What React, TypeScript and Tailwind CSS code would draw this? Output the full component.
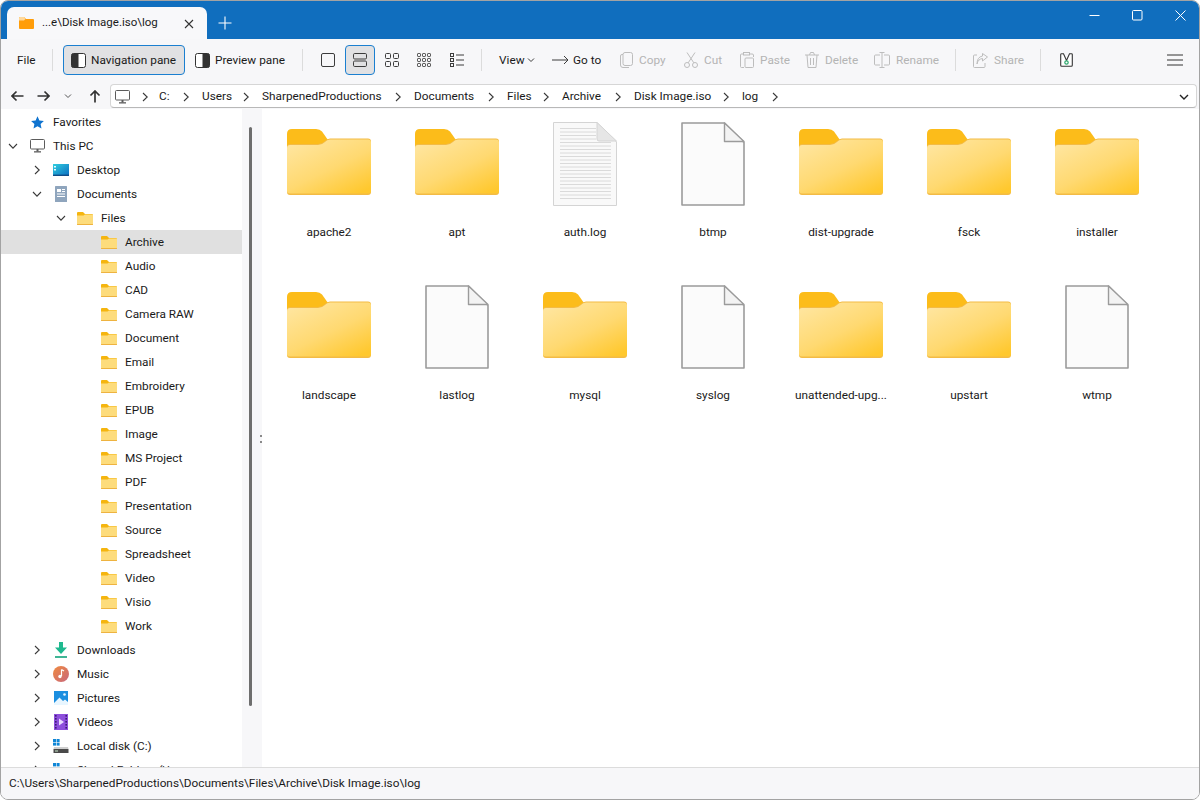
import React from "react";

function Folder({ w = 84, h = 66 }: { w?: number; h?: number }) {
  const id = React.useId().replace(/:/g, "");
  return (
    <svg width={w} height={h} viewBox="0 0 84 66" className="block shrink-0">
      <defs>
        <linearGradient id={id} x1="0.1" y1="0" x2="0.85" y2="1">
          <stop offset="0" stopColor="#ffe6a1" />
          <stop offset="0.55" stopColor="#ffd971" />
          <stop offset="1" stopColor="#ffc82e" />
        </linearGradient>
      </defs>
      <path d="M0 5 Q0 0 5 0 H29 Q33 0 35 2.5 L41 11 L36 18 H0 Z" fill="#fcbc1a" />
      <path d="M0 18 Q0 15 3 15 H31 Q35 15 38 12 Q40 9.5 43 9.5 H81 Q84 9.5 84 12.5 V63 Q84 66 81 66 H3 Q0 66 0 63 Z" fill="#f3bb45" />
      <path d="M0 19 Q0 16 3 16 H31 Q35 16 38 13 Q40 10.5 43 10.5 H81 Q84 10.5 84 13.5 V62 Q84 64.5 81 64.5 H3 Q0 64.5 0 62 Z" fill={`url(#${id})`} />
    </svg>
  );
}

function SmallFolder() {
  return (
    <svg width="16" height="13" viewBox="0 0 16 13" className="block">
      <path d="M0 1 Q0 0 1 0 H6 L8 2 H15 Q16 2 16 3 V4 H0 Z" fill="#f5b50f" />
      <path d="M0 3.5 H6.5 L8 2.5 H16 V12 Q16 13 15 13 H1 Q0 13 0 12 Z" fill="#fddc7c" />
      <path d="M0 12 H16 V12.4 Q16 13 15 13 H1 Q0 13 0 12.4 Z" fill="#eeb340" />
    </svg>
  );
}

function BlankFile() {
  return (
    <svg width="64" height="84" viewBox="0 0 64 84" className="block mt-[4px]">
      <path d="M1 1 H43.5 L63 20.5 V83 H1 Z" fill="#fbfbfb" stroke="#9b9b9b" strokeWidth="1.6" strokeLinejoin="round" />
      <path d="M43.5 1 V19.5 H63 Z" fill="#f3f3f3" stroke="#9b9b9b" strokeWidth="1.4" strokeLinejoin="round" />
    </svg>
  );
}

function TextFile() {
  const lines = [];
  for (let y = 6.5; y < 78; y += 3.5) lines.push(y);
  return (
    <svg width="64" height="84" viewBox="0 0 64 84" className="block mt-[4px]">
      <path d="M0.5 0.5 H44 L63.5 20 V83.5 H0.5 Z" fill="#f9f9f9" stroke="#d4d4d4" />
      {lines.map((y) => (
        <line key={y} x1="7" x2={y < 20 ? 43 : 58} y1={y} y2={y} stroke="#dadada" />
      ))}
      <path d="M44 0.5 V17 Q44 19 46 19 H63.5 Z" fill="#e6e6e6" stroke="#d4d4d4" />
    </svg>
  );
}

const Tile = ({ name, kind }: { name: string; kind: "folder" | "file" | "text" }) => (
  <div className="w-[128px] h-[163px] flex flex-col items-center">
    <div className="h-[96px] w-[96px] flex items-center justify-center">
      {kind === "folder" ? <Folder /> : kind === "file" ? <BlankFile /> : <TextFile />}
    </div>
    <div className="mt-[13px] h-[18px] leading-[18px] text-[#1a1a1a] text-center whitespace-nowrap">{name}</div>
  </div>
);

const Chev = ({ dir = "right", c = "#3a3a3a" }: { dir?: "right" | "down"; c?: string }) => (
  <svg width="10" height="10" viewBox="0 0 10 10" className="block">
    {dir === "right" ? (
      <path d="M3 1 L7.2 5 L3 9" fill="none" stroke={c} strokeWidth="1.1" />
    ) : (
      <path d="M1 3 L5 7.2 L9 3" fill="none" stroke={c} strokeWidth="1.1" />
    )}
  </svg>
);

const PcIcon = () => (
  <svg width="15" height="14" viewBox="0 0 15 14" className="block">
    <rect x="0.5" y="0.5" width="14" height="9.5" rx="1" fill="#fff" stroke="#5c5c5c" />
    <rect x="6.5" y="10" width="2" height="2.5" fill="#5c5c5c" />
    <rect x="4" y="12.2" width="7" height="1.3" fill="#5c5c5c" />
  </svg>
);

const DesktopIcon = () => (
  <svg width="16" height="12" viewBox="0 0 16 12" className="block">
    <defs>
      <linearGradient id="dk" x1="0" y1="0" x2="1" y2="1">
        <stop offset="0" stopColor="#30cfe0" />
        <stop offset="1" stopColor="#0c6cc0" />
      </linearGradient>
    </defs>
    <rect width="16" height="12" fill="url(#dk)" />
    <rect x="1" y="2" width="2" height="1.5" fill="#e6fbff" />
    <rect x="1" y="5" width="2" height="1.5" fill="#e6fbff" />
    <rect x="0" y="10.6" width="16" height="1.4" fill="#114d88" />
  </svg>
);

const DocsIcon = () => (
  <svg width="12" height="16" viewBox="0 0 12 16" className="block">
    <rect width="12" height="16" rx="0.5" fill="#8fa5bd" />
    <rect x="2" y="3" width="4" height="3" fill="#fff" />
    <rect x="7" y="3" width="3" height="1" fill="#fff" />
    <rect x="7" y="5" width="3" height="1" fill="#fff" />
    <rect x="2" y="7.5" width="8" height="1" fill="#fff" />
    <rect x="2" y="10" width="8" height="1" fill="#fff" />
  </svg>
);

const DownloadIcon = () => (
  <svg width="12" height="16" viewBox="0 0 12 16" className="block">
    <path d="M4 0 H8 V5.5 H12 L6 12 L0 5.5 H4 Z" fill="#1fb98f" />
    <rect y="14.2" width="12" height="1.6" fill="#12a37c" />
  </svg>
);

const MusicIcon = () => (
  <svg width="16" height="16" viewBox="0 0 16 16" className="block">
    <defs>
      <linearGradient id="mu" x1="0" y1="0" x2="1" y2="1">
        <stop offset="0" stopColor="#f08a3e" />
        <stop offset="1" stopColor="#c8687e" />
      </linearGradient>
    </defs>
    <circle cx="8" cy="8" r="8" fill="url(#mu)" />
    <path d="M8.5 3.5 V10 M8.5 3.5 L11 5" stroke="#fff" strokeWidth="1.2" fill="none" />
    <circle cx="7" cy="10.5" r="1.7" fill="#fff" />
  </svg>
);

const PicturesIcon = () => (
  <svg width="14" height="14" viewBox="0 0 14 14" className="block">
    <rect width="14" height="14" fill="#1c8fe0" />
    <path d="M0 12 L5.5 6.5 L9 10 L11 8.5 L14 11 V14 H0 Z" fill="#e8f6ff" />
    <circle cx="10.5" cy="3.5" r="1.3" fill="#e8f6ff" />
  </svg>
);

const VideosIcon = () => (
  <svg width="14" height="16" viewBox="0 0 14 16" className="block">
    <rect width="14" height="16" fill="#8d4fdc" />
    <path d="M5 4.5 L10 8 L5 11.5 Z" fill="#e9dcff" />
    {[1, 4, 7, 10, 13].map((y) => (
      <React.Fragment key={y}>
        <rect x="1" y={y} width="1.6" height="1.6" fill="#3d1a78" />
        <rect x="11.4" y={y} width="1.6" height="1.6" fill="#3d1a78" />
      </React.Fragment>
    ))}
  </svg>
);

const DiskIcon = () => (
  <svg width="16" height="14" viewBox="0 0 16 14" className="block">
    <rect x="0" y="0" width="3" height="3" fill="#0f86d6" />
    <rect x="3.6" y="0" width="3" height="3" fill="#0f86d6" />
    <rect x="0" y="3.6" width="3" height="3" fill="#0f86d6" />
    <rect x="3.6" y="3.6" width="3" height="3" fill="#0f86d6" />
    <path d="M1 8 H15 L15.5 10 H0.5 Z" fill="#cfcfcf" />
    <rect x="0.5" y="10" width="15" height="4" fill="#4a4a4a" />
    <rect x="2" y="11.5" width="3" height="1" fill="#c8e6c8" />
  </svg>
);

const Star = () => (
  <svg width="13" height="13" viewBox="0 0 13 13" className="block">
    <path d="M6.5 0.3 L8.4 4.4 L12.9 4.9 L9.6 8 L10.5 12.6 L6.5 10.3 L2.5 12.6 L3.4 8 L0.1 4.9 L4.6 4.4 Z" fill="#0f73cf" />
  </svg>
);

type Row = { t: string; lvl: 0 | 1 | 2 | 3; chev?: "right" | "down"; icon: React.ReactNode; sel?: boolean };

const PAD = ["pl-0", "pl-[24px]", "pl-[48px]", "pl-[72px]"];

const folderNames = ["Audio", "CAD", "Camera RAW", "Document", "Email", "Embroidery", "EPUB", "Image", "MS Project", "PDF", "Presentation", "Source", "Spreadsheet", "Video", "Visio", "Work"];

const rows: Row[] = [
  { t: "Favorites", lvl: 0, icon: <Star /> },
  { t: "This PC", lvl: 0, chev: "down", icon: <PcIcon /> },
  { t: "Desktop", lvl: 1, chev: "right", icon: <DesktopIcon /> },
  { t: "Documents", lvl: 1, chev: "down", icon: <DocsIcon /> },
  { t: "Files", lvl: 2, chev: "down", icon: <SmallFolder /> },
  { t: "Archive", lvl: 3, icon: <SmallFolder />, sel: true },
  ...folderNames.map((t) => ({ t, lvl: 3 as const, icon: <SmallFolder /> })),
  { t: "Downloads", lvl: 1, chev: "right", icon: <DownloadIcon /> },
  { t: "Music", lvl: 1, chev: "right", icon: <MusicIcon /> },
  { t: "Pictures", lvl: 1, chev: "right", icon: <PicturesIcon /> },
  { t: "Videos", lvl: 1, chev: "right", icon: <VideosIcon /> },
  { t: "Local disk (C:)", lvl: 1, chev: "right", icon: <DiskIcon /> },
  { t: "Shared Folders (\\\\", lvl: 1, chev: "right", icon: <DiskIcon /> },
];

const Sep = ({ cls }: { cls: string }) => <div className={`w-px h-[22px] bg-[#dcdcdc] shrink-0 ${cls}`} />;

const S = "#3c3c3c";
const D = "#bdbdbd";

const PaneIcon = ({ side }: { side: "left" | "right" }) => (
  <svg width="15" height="15" viewBox="0 0 15 15" className="block shrink-0">
    <rect x="0.5" y="0.5" width="14" height="14" rx="2" fill="#fff" stroke="#333" />
    {side === "left" ? <path d="M2 0.5 H7.5 V14.5 H2 Q0.5 14.5 0.5 13 V2 Q0.5 0.5 2 0.5 Z" fill="#333" /> : <path d="M7.5 0.5 H13 Q14.5 0.5 14.5 2 V13 Q14.5 14.5 13 14.5 H7.5 Z" fill="#333" />}
  </svg>
);

const Tool = ({ ml, w, icon, label, disabled, gap = "gap-[6px]" }: { ml: string; w: string; icon: React.ReactNode; label: string; disabled?: boolean; gap?: string }) => (
  <div className={`flex items-center shrink-0 ${gap} ${ml} ${disabled ? "text-[#b4b4b4]" : "text-[#1a1a1a]"}`}>
    {icon}
    <span className={`mt-[2px] ${w}`}>{label}</span>
  </div>
);

const crumbs = [
  { t: "C:", w: "w-[11px]" },
  { t: "Users", w: "w-[28px]" },
  { t: "SharpenedProductions", w: "w-[120px]" },
  { t: "Documents", w: "w-[61px]" },
  { t: "Files", w: "w-[23px]" },
  { t: "Archive", w: "w-[40px]" },
  { t: "Disk Image.iso", w: "w-[76px]" },
  { t: "log", w: "w-[17px]" },
];

export default function App() {
  return (
    <div className="w-[1200px] h-[800px] bg-white overflow-hidden font-['Roboto','Noto_Sans',sans-serif] text-[11.8px]">
      <div className="w-full h-full flex flex-col rounded-lg border border-[#a3a3a3] overflow-hidden">
        {/* Title bar */}
        <div className="h-[38px] bg-[#106ebe] flex items-end shrink-0 relative">
          <div className="ml-[6px] w-[200px] h-[32px] bg-[#f8f8fa] rounded-t-[7px] flex items-center shrink-0 relative">
            <svg width="15" height="12" viewBox="0 0 15 12" className="ml-[12px] block shrink-0">
              <path d="M0 1 Q0 0 1 0 H5 L7 2 H14 Q15 2 15 3 V11 Q15 12 14 12 H1 Q0 12 0 11 Z" fill="#ff9d0a" />
              <path d="M0 1 Q0 0 1 0 H5 L6.5 2 L5 3.5 H0 Z" fill="#ffd89a" />
            </svg>
            <span className="ml-[8px] text-[#1a1a1a] text-[11.5px] whitespace-nowrap">...e\Disk Image.iso\log</span>
            <svg width="10" height="10" viewBox="0 0 10 10" className="absolute left-[177px] top-[12px]">
              <path d="M1 1 L9 9 M9 1 L1 9" stroke="#333" strokeWidth="1.1" />
            </svg>
          </div>
          <svg width="14" height="14" viewBox="0 0 14 14" className="ml-[11px] mb-[9px] block">
            <path d="M7 0.5 V13.5 M0.5 7 H13.5" stroke="#fff" strokeWidth="1.1" />
          </svg>
          <div className="absolute right-[13px] top-[9px] flex items-center gap-[32px]">
            <svg width="11" height="11" viewBox="0 0 11 11" className="block"><path d="M0.5 5.5 H10.5" stroke="#fff" /></svg>
            <svg width="11" height="11" viewBox="0 0 11 11" className="block"><rect x="0.5" y="0.5" width="9.5" height="9.5" rx="1" fill="none" stroke="#fff" /></svg>
            <svg width="11" height="11" viewBox="0 0 11 11" className="block"><path d="M0.5 0.5 L10.5 10.5 M10.5 0.5 L0.5 10.5" stroke="#fff" /></svg>
          </div>
        </div>

        {/* Toolbar */}
        <div className="h-[45px] pb-[3px] bg-[#f7f7f9] flex items-center shrink-0 whitespace-nowrap">
          <span className="ml-[16px] mt-[2px] w-[18px] text-[#1a1a1a]">File</span>
          <Sep cls="ml-[17px]" />
          <div className="ml-[10px] w-[122px] h-[30px] flex items-center gap-[5px] pl-[7px] rounded-[4px] border border-[#1a7fd0] bg-[#e1e1e3] text-[#1a1a1a] shrink-0">
            <PaneIcon side="left" />
            <span className="mt-[2px]">Navigation pane</span>
          </div>
          <Tool ml="ml-[10px]" w="w-[70px]" gap="gap-[5px]" label="Preview pane" icon={<PaneIcon side="right" />} />
          <Sep cls="ml-[17px]" />
          <svg width="14" height="14" viewBox="0 0 14 14" className="ml-[18px] block shrink-0">
            <rect x="0.5" y="0.5" width="13" height="13" rx="1.5" fill="none" stroke={S} />
          </svg>
          <div className="ml-[10px] w-[30px] h-[30px] rounded-[4px] border border-[#1a7fd0] bg-[#e1e1e3] flex items-center justify-center shrink-0">
            <svg width="14" height="14" viewBox="0 0 14 14" className="block">
              <rect x="0.5" y="0.5" width="13" height="5.5" rx="1.2" fill="none" stroke={S} />
              <rect x="0.5" y="8" width="13" height="5.5" rx="1.2" fill="none" stroke={S} />
            </svg>
          </div>
          <svg width="14" height="14" viewBox="0 0 14 14" className="ml-[10px] block shrink-0">
            <rect x="0.5" y="0.5" width="5" height="5" rx="1" fill="none" stroke={S} />
            <rect x="8.5" y="0.5" width="5" height="5" rx="1" fill="none" stroke={S} />
            <rect x="0.5" y="8.5" width="5" height="5" rx="1" fill="none" stroke={S} />
            <rect x="8.5" y="8.5" width="5" height="5" rx="1" fill="none" stroke={S} />
          </svg>
          <svg width="14" height="14" viewBox="0 0 14 14" className="ml-[18px] block shrink-0">
            {[0.5, 5.5, 10.5].map((y) =>
              [0.5, 5.5, 10.5].map((x) => <rect key={`${x}-${y}`} x={x} y={y} width="3" height="3" rx="0.8" fill="none" stroke={S} />)
            )}
          </svg>
          <svg width="14" height="14" viewBox="0 0 14 14" className="ml-[19px] block shrink-0">
            {[1, 6, 11].map((y) => (
              <React.Fragment key={y}>
                <rect x="0.5" y={y - 0.5} width="3" height="3" fill="none" stroke={S} />
                <path d={`M6 ${y + 1} H14`} stroke={S} />
              </React.Fragment>
            ))}
          </svg>
          <Sep cls="ml-[17px]" />
          <span className="ml-[17px] mt-[2px] w-[25px] text-[#1a1a1a]">View</span>
          <svg width="8" height="8" viewBox="0 0 8 8" className="ml-[3px] block shrink-0"><path d="M1 2.5 L4 5.5 L7 2.5" fill="none" stroke={S} /></svg>
          <Tool ml="ml-[17px]" w="w-[29px]" gap="gap-[4px]" label="Go to" icon={
            <svg width="17" height="10" viewBox="0 0 17 10" className="block"><path d="M0 5 H16 M12 1 L16 5 L12 9" fill="none" stroke={S} /></svg>
          } />
          <Tool disabled ml="ml-[18px]" w="w-[28px]" label="Copy" icon={
            <svg width="13" height="16" viewBox="0 0 13 16" className="block"><rect x="3" y="0.5" width="9.5" height="13" rx="2" fill="none" stroke={D} /><path d="M3 2.5 H2 Q0.5 2.5 0.5 4 V13 Q0.5 15.5 3 15.5 H9" fill="none" stroke={D} /></svg>
          } />
          <Tool disabled ml="ml-[17px]" w="w-[19px]" label="Cut" icon={
            <svg width="14" height="16" viewBox="0 0 14 16" className="block"><circle cx="3" cy="13" r="2.5" fill="none" stroke={D} /><circle cx="11" cy="13" r="2.5" fill="none" stroke={D} /><path d="M4.2 10.8 L11 0.5 M9.8 10.8 L3 0.5" fill="none" stroke={D} /></svg>
          } />
          <Tool disabled ml="ml-[17px]" w="w-[28px]" label="Paste" icon={
            <svg width="14" height="16" viewBox="0 0 14 16" className="block"><path d="M3 2 H1.5 Q0.5 2 0.5 3 V14.5 Q0.5 15.5 1.5 15.5 H4 M10 2 H12 Q13.5 2 13.5 3 V5" fill="none" stroke={D} /><rect x="3.5" y="0.5" width="6" height="2.5" fill="none" stroke={D} /><rect x="5" y="6" width="8.5" height="9.5" rx="1" fill="none" stroke={D} /></svg>
          } />
          <Tool disabled ml="ml-[17px]" w="w-[33px]" label="Delete" icon={
            <svg width="14" height="16" viewBox="0 0 14 16" className="block"><path d="M0 3 H14 M4.5 3 L5.5 0.5 H8.5 L9.5 3 M2 3 L3 15.5 H11 L12 3 M5.5 6 V13 M8.5 6 V13" fill="none" stroke={D} /></svg>
          } />
          <Tool disabled ml="ml-[16px]" w="w-[42px]" label="Rename" icon={
            <svg width="16" height="16" viewBox="0 0 16 16" className="block"><path d="M6 3 H1.5 Q0.5 3 0.5 4 V12 Q0.5 13 1.5 13 H6 M10 3 H14.5 Q15.5 3 15.5 4 V12 Q15.5 13 14.5 13 H10 M8 0.5 V15.5 M5.5 0.5 H10.5 M5.5 15.5 H10.5" fill="none" stroke={D} /></svg>
          } />
          <Sep cls="ml-[17px]" />
          <Tool disabled ml="ml-[17px]" w="w-[29px]" label="Share" icon={
            <svg width="15" height="15" viewBox="0 0 15 15" className="block"><path d="M4 2 H1.5 Q0.5 2 0.5 3 V13.5 Q0.5 14.5 1.5 14.5 H11 Q12 14.5 12 13.5 V10 M4 11 Q5 6 9.5 5.5 V8 L14.5 4 L9.5 0.5 V3 Q4 4 4 11 Z" fill="none" stroke={D} /></svg>
          } />
          <Sep cls="ml-[17px]" />
          <svg width="13" height="14" viewBox="0 0 13 14" className="ml-[19px] block shrink-0">
            <path d="M1.5 0.7 H3.5 L6.5 7.5 L9.5 0.7 H11.5 Q12.3 0.7 12.3 1.5 V12.3 Q12.3 13.3 11.3 13.3 H1.7 Q0.7 13.3 0.7 12.3 V1.5 Q0.7 0.7 1.5 0.7 Z" fill="#fff" stroke="#333" strokeWidth="1.1" />
            <circle cx="6.5" cy="9.5" r="1.7" fill="#fff" stroke="#2aa66b" strokeWidth="1.2" />
          </svg>
          <svg width="16" height="12" viewBox="0 0 16 12" className="ml-auto mr-[16px] block shrink-0">
            <path d="M0 1 H16 M0 6 H16 M0 11 H16" stroke="#333" />
          </svg>
        </div>

        {/* Address row */}
        <div className="h-[25px] bg-[#f7f7f9] flex items-start shrink-0">
          <div className="w-[109px] h-[24px] flex items-center relative shrink-0">
            <svg width="13" height="12" viewBox="0 0 13 12" className="ml-[10px] block"><path d="M12.5 6 H1 M5.5 1.5 L1 6 L5.5 10.5" fill="none" stroke="#333" strokeWidth="1.7" /></svg>
            <svg width="13" height="12" viewBox="0 0 13 12" className="ml-[13px] block"><path d="M0.5 6 H12 M7.5 1.5 L12 6 L7.5 10.5" fill="none" stroke="#333" strokeWidth="1.7" /></svg>
            <svg width="8" height="8" viewBox="0 0 8 8" className="ml-[14px] block"><path d="M1 2.5 L4 5.5 L7 2.5" fill="none" stroke="#555" /></svg>
            <svg width="12" height="13" viewBox="0 0 12 13" className="ml-[17px] block"><path d="M6 12.5 V1 M1.5 5.5 L6 1 L10.5 5.5" fill="none" stroke="#333" strokeWidth="1.7" /></svg>
          </div>
          <div className="w-[1087px] h-[24px] pt-[1px] bg-white border border-[#d6d6d6] border-b-[#b8b8b8] rounded-[4px] flex items-center text-[#1a1a1a] whitespace-nowrap shrink-0">
            <div className="ml-[4px]"><PcIcon /></div>
            <div className="w-[29px] flex justify-center shrink-0"><Chev /></div>
            {crumbs.map((c) => (
              <React.Fragment key={c.t}>
                <span className={c.w}>{c.t}</span>
                <div className="w-[32px] flex justify-center shrink-0"><Chev /></div>
              </React.Fragment>
            ))}
            <svg width="10" height="10" viewBox="0 0 10 10" className="ml-auto mr-[7px] block"><path d="M1 3 L5 7 L9 3" fill="none" stroke="#222" strokeWidth="1.4" /></svg>
          </div>
        </div>

        {/* Main */}
        <div className="flex-1 min-h-0 flex">
          <div className="w-[241px] bg-white overflow-hidden pt-[1px] shrink-0">
            {rows.map((r) => (
              <div key={r.t} className={`h-[24px] flex items-center whitespace-nowrap ${PAD[r.lvl]} ${r.sel ? "bg-[#e0e0e0]" : ""}`}>
                <div className="w-[24px] flex justify-center shrink-0">{r.chev ? <Chev dir={r.chev} /> : null}</div>
                <div className="w-[24px] flex justify-center shrink-0">{r.icon}</div>
                <span className="ml-[4px] mt-[2px] text-[#1a1a1a]">{r.t}</span>
              </div>
            ))}
          </div>
          <div className="w-[20px] bg-[#f7f7f9] shrink-0 flex relative">
            <div className="ml-[7px] mt-[18px] w-[3px] h-[579px] rounded-full bg-[#6e6e6e]" />
            <div className="absolute left-[18px] top-[326px] w-[2px] h-[8px] border-y-2 border-[#8a8a8a]" />
          </div>
          <div className="flex-1 min-w-0 bg-white pl-[3px] pt-[5px]">
            <div className="grid grid-cols-[repeat(7,128px)]">
              <Tile name="apache2" kind="folder" />
              <Tile name="apt" kind="folder" />
              <Tile name="auth.log" kind="text" />
              <Tile name="btmp" kind="file" />
              <Tile name="dist-upgrade" kind="folder" />
              <Tile name="fsck" kind="folder" />
              <Tile name="installer" kind="folder" />
              <Tile name="landscape" kind="folder" />
              <Tile name="lastlog" kind="file" />
              <Tile name="mysql" kind="folder" />
              <Tile name="syslog" kind="file" />
              <Tile name="unattended-upg..." kind="folder" />
              <Tile name="upstart" kind="folder" />
              <Tile name="wtmp" kind="file" />
            </div>
          </div>
        </div>

        {/* Status */}
        <div className="h-[32px] bg-[#f7f7f9] border-t border-[#dcdcdc] flex items-center pl-[8px] text-[#1a1a1a] shrink-0 relative">
          C:\Users\SharpenedProductions\Documents\Files\Archive\Disk Image.iso\log
        </div>
      </div>
    </div>
  );
}
